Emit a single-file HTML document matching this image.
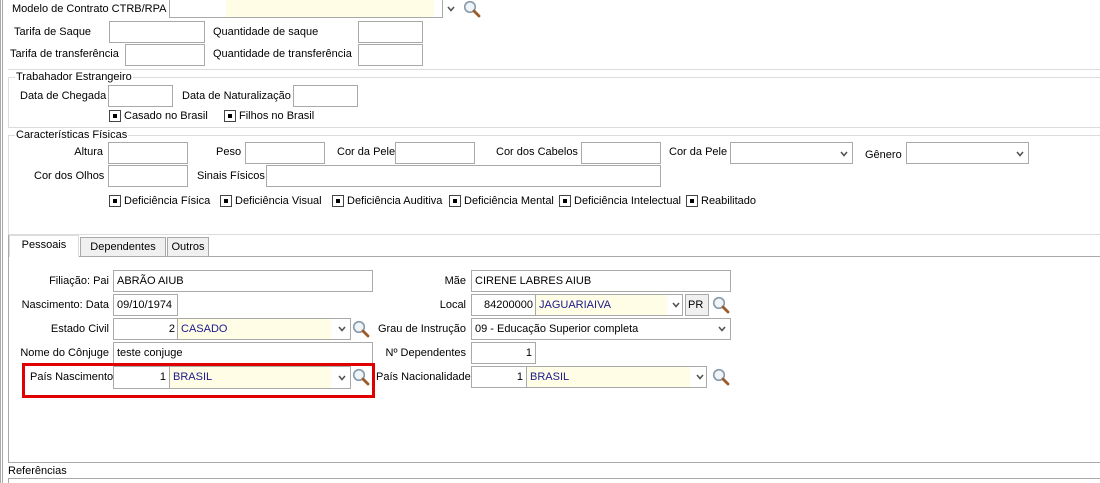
<!DOCTYPE html>
<html><head><meta charset="utf-8"><style>
body{margin:0;width:1100px;height:483px;background:#fff;position:relative;overflow:hidden;font-family:"Liberation Sans",Arial,sans-serif;font-size:11px;color:#000}
div,span{position:absolute;box-sizing:border-box}
.l{white-space:nowrap;line-height:14px}
.r{text-align:right}
.i{border:1px solid #a9a9a9;background:#fff;padding:0 3px;line-height:20px;white-space:nowrap}
.y{background:#fffde6;color:#1a1a8c;line-height:21px;padding-left:3px;white-space:nowrap}
.h{height:1px;background:#dcdcdc}
.cb{width:12px;height:12px;border:1px solid #444;background:#fff}
.cb:after{content:"";position:absolute;left:3px;top:3px;width:4px;height:4px;background:#000}
.ar{width:8px;height:6px}
.tab{border:1px solid #a9a9a9;border-bottom:none;background:#f0f0f0;text-align:center;line-height:18px}
</style></head><body>
<svg width="0" height="0" style="position:absolute"><defs>
<symbol id="mg" viewBox="0 0 18 18"><circle cx="7" cy="7" r="5.3" fill="#eef4f8" stroke="#8a9aa8" stroke-width="1.6"/><path d="M11 11 L16 16" stroke="#9a5a2a" stroke-width="2.8" stroke-linecap="round"/></symbol>
<symbol id="dn" viewBox="0 0 8 6"><path d="M1 1 L4 4.5 L7 1" stroke="#555" stroke-width="1.6" fill="none"/></symbol>
</defs></svg>

<div style="left:0;top:0;width:1px;height:483px;background:#a9a9a9"></div>
<div style="left:2px;top:0;width:1px;height:483px;background:#a9a9a9"></div>

<div class="l" style="left:12px;top:2px">Modelo de Contrato CTRB/RPA</div>
<div class="i" style="left:169px;top:-3px;width:274px;height:21px"></div>
<div class="y" style="left:226px;top:-2px;width:208px;height:19px"></div>
<svg class="ar" style="position:absolute;left:447px;top:6px" width="8" height="6"><use href="#dn"/></svg>
<svg style="position:absolute;left:463px;top:0" width="18" height="18"><use href="#mg"/></svg>

<div class="l" style="left:14px;top:25px">Tarifa de Saque</div>
<div class="i" style="left:109px;top:21px;width:96px;height:22px"></div>
<div class="l" style="left:213px;top:25px">Quantidade de saque</div>
<div class="i" style="left:358px;top:21px;width:65px;height:22px"></div>
<div class="l" style="left:10px;top:47px">Tarifa de transferência</div>
<div class="i" style="left:125px;top:44px;width:80px;height:22px"></div>
<div class="l" style="left:213px;top:47px">Quantidade de transferência</div>
<div class="i" style="left:358px;top:44px;width:65px;height:22px"></div>

<div class="h" style="left:8px;top:69px;width:1092px"></div>
<div class="h" style="left:8px;top:77px;width:1092px"></div>
<div style="left:8px;top:77px;width:1px;height:50px;background:#dcdcdc"></div>
<div class="h" style="left:8px;top:127px;width:1092px"></div>
<div class="l" style="left:15px;top:70px;background:#fff;padding:0 1px">Trabahador Estrangeiro</div>
<div class="l" style="left:20px;top:89px">Data de Chegada</div>
<div class="i" style="left:108px;top:85px;width:65px;height:22px"></div>
<div class="l" style="left:182px;top:89px">Data de Naturalização</div>
<div class="i" style="left:293px;top:85px;width:65px;height:22px"></div>
<div class="cb" style="left:109px;top:110px"></div><div class="l" style="left:124px;top:109px">Casado no Brasil</div>
<div class="cb" style="left:224px;top:110px"></div><div class="l" style="left:239px;top:109px">Filhos no Brasil</div>

<div class="h" style="left:8px;top:135px;width:1092px"></div>
<div style="left:8px;top:135px;width:1px;height:100px;background:#dcdcdc"></div>
<div class="h" style="left:8px;top:234px;width:1092px"></div>
<div class="l" style="left:15px;top:128px;background:#fff;padding:0 1px">Características Físicas</div>
<div class="l r" style="left:40px;top:145px;width:63px">Altura</div>
<div class="i" style="left:108px;top:142px;width:80px;height:22px"></div>
<div class="l" style="left:216px;top:145px">Peso</div>
<div class="i" style="left:245px;top:142px;width:80px;height:22px"></div>
<div class="l" style="left:337px;top:145px">Cor da Pele</div>
<div class="i" style="left:395px;top:142px;width:80px;height:22px"></div>
<div class="l" style="left:496px;top:145px">Cor dos Cabelos</div>
<div class="i" style="left:581px;top:142px;width:80px;height:22px"></div>
<div class="l" style="left:669px;top:145px">Cor da Pele</div>
<div class="i" style="left:730px;top:142px;width:123px;height:22px"></div>
<svg style="position:absolute;left:840px;top:151px" width="8" height="6"><use href="#dn"/></svg>
<div class="l" style="left:865px;top:148px">Gênero</div>
<div class="i" style="left:906px;top:142px;width:123px;height:22px"></div>
<svg style="position:absolute;left:1016px;top:151px" width="8" height="6"><use href="#dn"/></svg>

<div class="l" style="left:34px;top:169px">Cor dos Olhos</div>
<div class="i" style="left:108px;top:165px;width:80px;height:22px"></div>
<div class="l" style="left:197px;top:169px">Sinais Físicos</div>
<div class="i" style="left:266px;top:165px;width:395px;height:22px"></div>

<div class="cb" style="left:109px;top:195px"></div><div class="l" style="left:124px;top:194px">Deficiência Física</div>
<div class="cb" style="left:220px;top:195px"></div><div class="l" style="left:235px;top:194px">Deficiência Visual</div>
<div class="cb" style="left:332px;top:195px"></div><div class="l" style="left:347px;top:194px">Deficiência Auditiva</div>
<div class="cb" style="left:449px;top:195px"></div><div class="l" style="left:464px;top:194px">Deficiência Mental</div>
<div class="cb" style="left:559px;top:195px"></div><div class="l" style="left:574px;top:194px">Deficiência Intelectual</div>
<div class="cb" style="left:686px;top:195px"></div><div class="l" style="left:701px;top:194px">Reabilitado</div>

<div style="left:8px;top:256px;width:1092px;height:1px;background:#a9a9a9"></div>
<div style="left:8px;top:235px;width:1px;height:228px;background:#a9a9a9"></div>
<div style="left:8px;top:462px;width:1092px;height:1px;background:#a9a9a9"></div>
<div class="tab" style="left:9px;top:235px;width:70px;height:22px;background:#fff;border-color:#dcdcdc;line-height:19px">Pessoais</div>
<div class="tab" style="left:80px;top:237px;width:86px;height:19px">Dependentes</div>
<div class="tab" style="left:167px;top:237px;width:42px;height:19px">Outros</div>

<div class="l r" style="left:20px;top:274px;width:89px">Filiação: Pai</div>
<div class="i" style="left:113px;top:270px;width:260px;height:22px">ABRÃO AIUB</div>
<div class="l r" style="left:20px;top:298px;width:89px">Nascimento: Data</div>
<div class="i" style="left:113px;top:294px;width:65px;height:22px">09/10/1974</div>
<div class="l r" style="left:20px;top:322px;width:89px">Estado Civil</div>
<div class="i r" style="left:113px;top:318px;width:238px;height:22px"></div>
<div class="l r" style="left:114px;top:322px;width:61px">2</div>
<div style="left:177px;top:319px;width:1px;height:20px;background:#a9a9a9"></div>
<div class="y" style="left:178px;top:319px;width:153px;height:20px">CASADO</div>
<svg style="position:absolute;left:338px;top:326px" width="8" height="6"><use href="#dn"/></svg>
<svg style="position:absolute;left:352px;top:320px" width="18" height="18"><use href="#mg"/></svg>
<div class="l r" style="left:20px;top:346px;width:89px">Nome do Cônjuge</div>
<div class="i" style="left:113px;top:342px;width:260px;height:22px">teste conjuge</div>

<div style="left:22px;top:363px;width:353px;height:35px;border:3px solid #e00000"></div>
<div class="l" style="left:30px;top:370px">País Nascimento</div>
<div class="i" style="left:113px;top:366px;width:238px;height:23px"></div>
<div class="l r" style="left:114px;top:370px;width:52px">1</div>
<div style="left:169px;top:367px;width:1px;height:21px;background:#a9a9a9"></div>
<div class="y" style="left:170px;top:367px;width:161px;height:21px">BRASIL</div>
<svg style="position:absolute;left:338px;top:375px" width="8" height="6"><use href="#dn"/></svg>
<svg style="position:absolute;left:352px;top:368px" width="18" height="18"><use href="#mg"/></svg>

<div class="l r" style="left:380px;top:274px;width:86px">Mãe</div>
<div class="i" style="left:471px;top:270px;width:260px;height:22px">CIRENE LABRES AIUB</div>
<div class="l r" style="left:380px;top:298px;width:86px">Local</div>
<div class="i" style="left:471px;top:294px;width:212px;height:22px"></div>
<div class="l r" style="left:472px;top:298px;width:61px">84200000</div>
<div style="left:535px;top:295px;width:1px;height:20px;background:#a9a9a9"></div>
<div class="y" style="left:536px;top:295px;width:131px;height:20px">JAGUARIAIVA</div>
<svg style="position:absolute;left:672px;top:302px" width="8" height="6"><use href="#dn"/></svg>
<div class="i" style="left:685px;top:294px;width:24px;height:22px;background:#f0f0f0;padding:0 2px">PR</div>
<svg style="position:absolute;left:712px;top:296px" width="18" height="18"><use href="#mg"/></svg>
<div class="l r" style="left:370px;top:322px;width:96px">Grau de Instrução</div>
<div class="i" style="left:471px;top:318px;width:260px;height:22px">09 - Educação Superior completa</div>
<svg style="position:absolute;left:718px;top:326px" width="8" height="6"><use href="#dn"/></svg>
<div class="l r" style="left:370px;top:346px;width:96px">Nº Dependentes</div>
<div class="i r" style="left:471px;top:342px;width:65px;height:22px">1</div>
<div class="l" style="left:376px;top:370px">País Nacionalidade</div>
<div class="i" style="left:471px;top:366px;width:236px;height:22px"></div>
<div class="l r" style="left:472px;top:370px;width:51px">1</div>
<div style="left:526px;top:367px;width:1px;height:20px;background:#a9a9a9"></div>
<div class="y" style="left:527px;top:367px;width:163px;height:20px">BRASIL</div>
<svg style="position:absolute;left:696px;top:374px" width="8" height="6"><use href="#dn"/></svg>
<svg style="position:absolute;left:712px;top:368px" width="18" height="18"><use href="#mg"/></svg>

<div class="l" style="left:8px;top:464px;font-size:11px">Referências</div>
<div style="left:8px;top:478px;width:1092px;height:1px;background:#a9a9a9"></div>
<div style="left:8px;top:478px;width:1px;height:5px;background:#a9a9a9"></div>
</body></html>
